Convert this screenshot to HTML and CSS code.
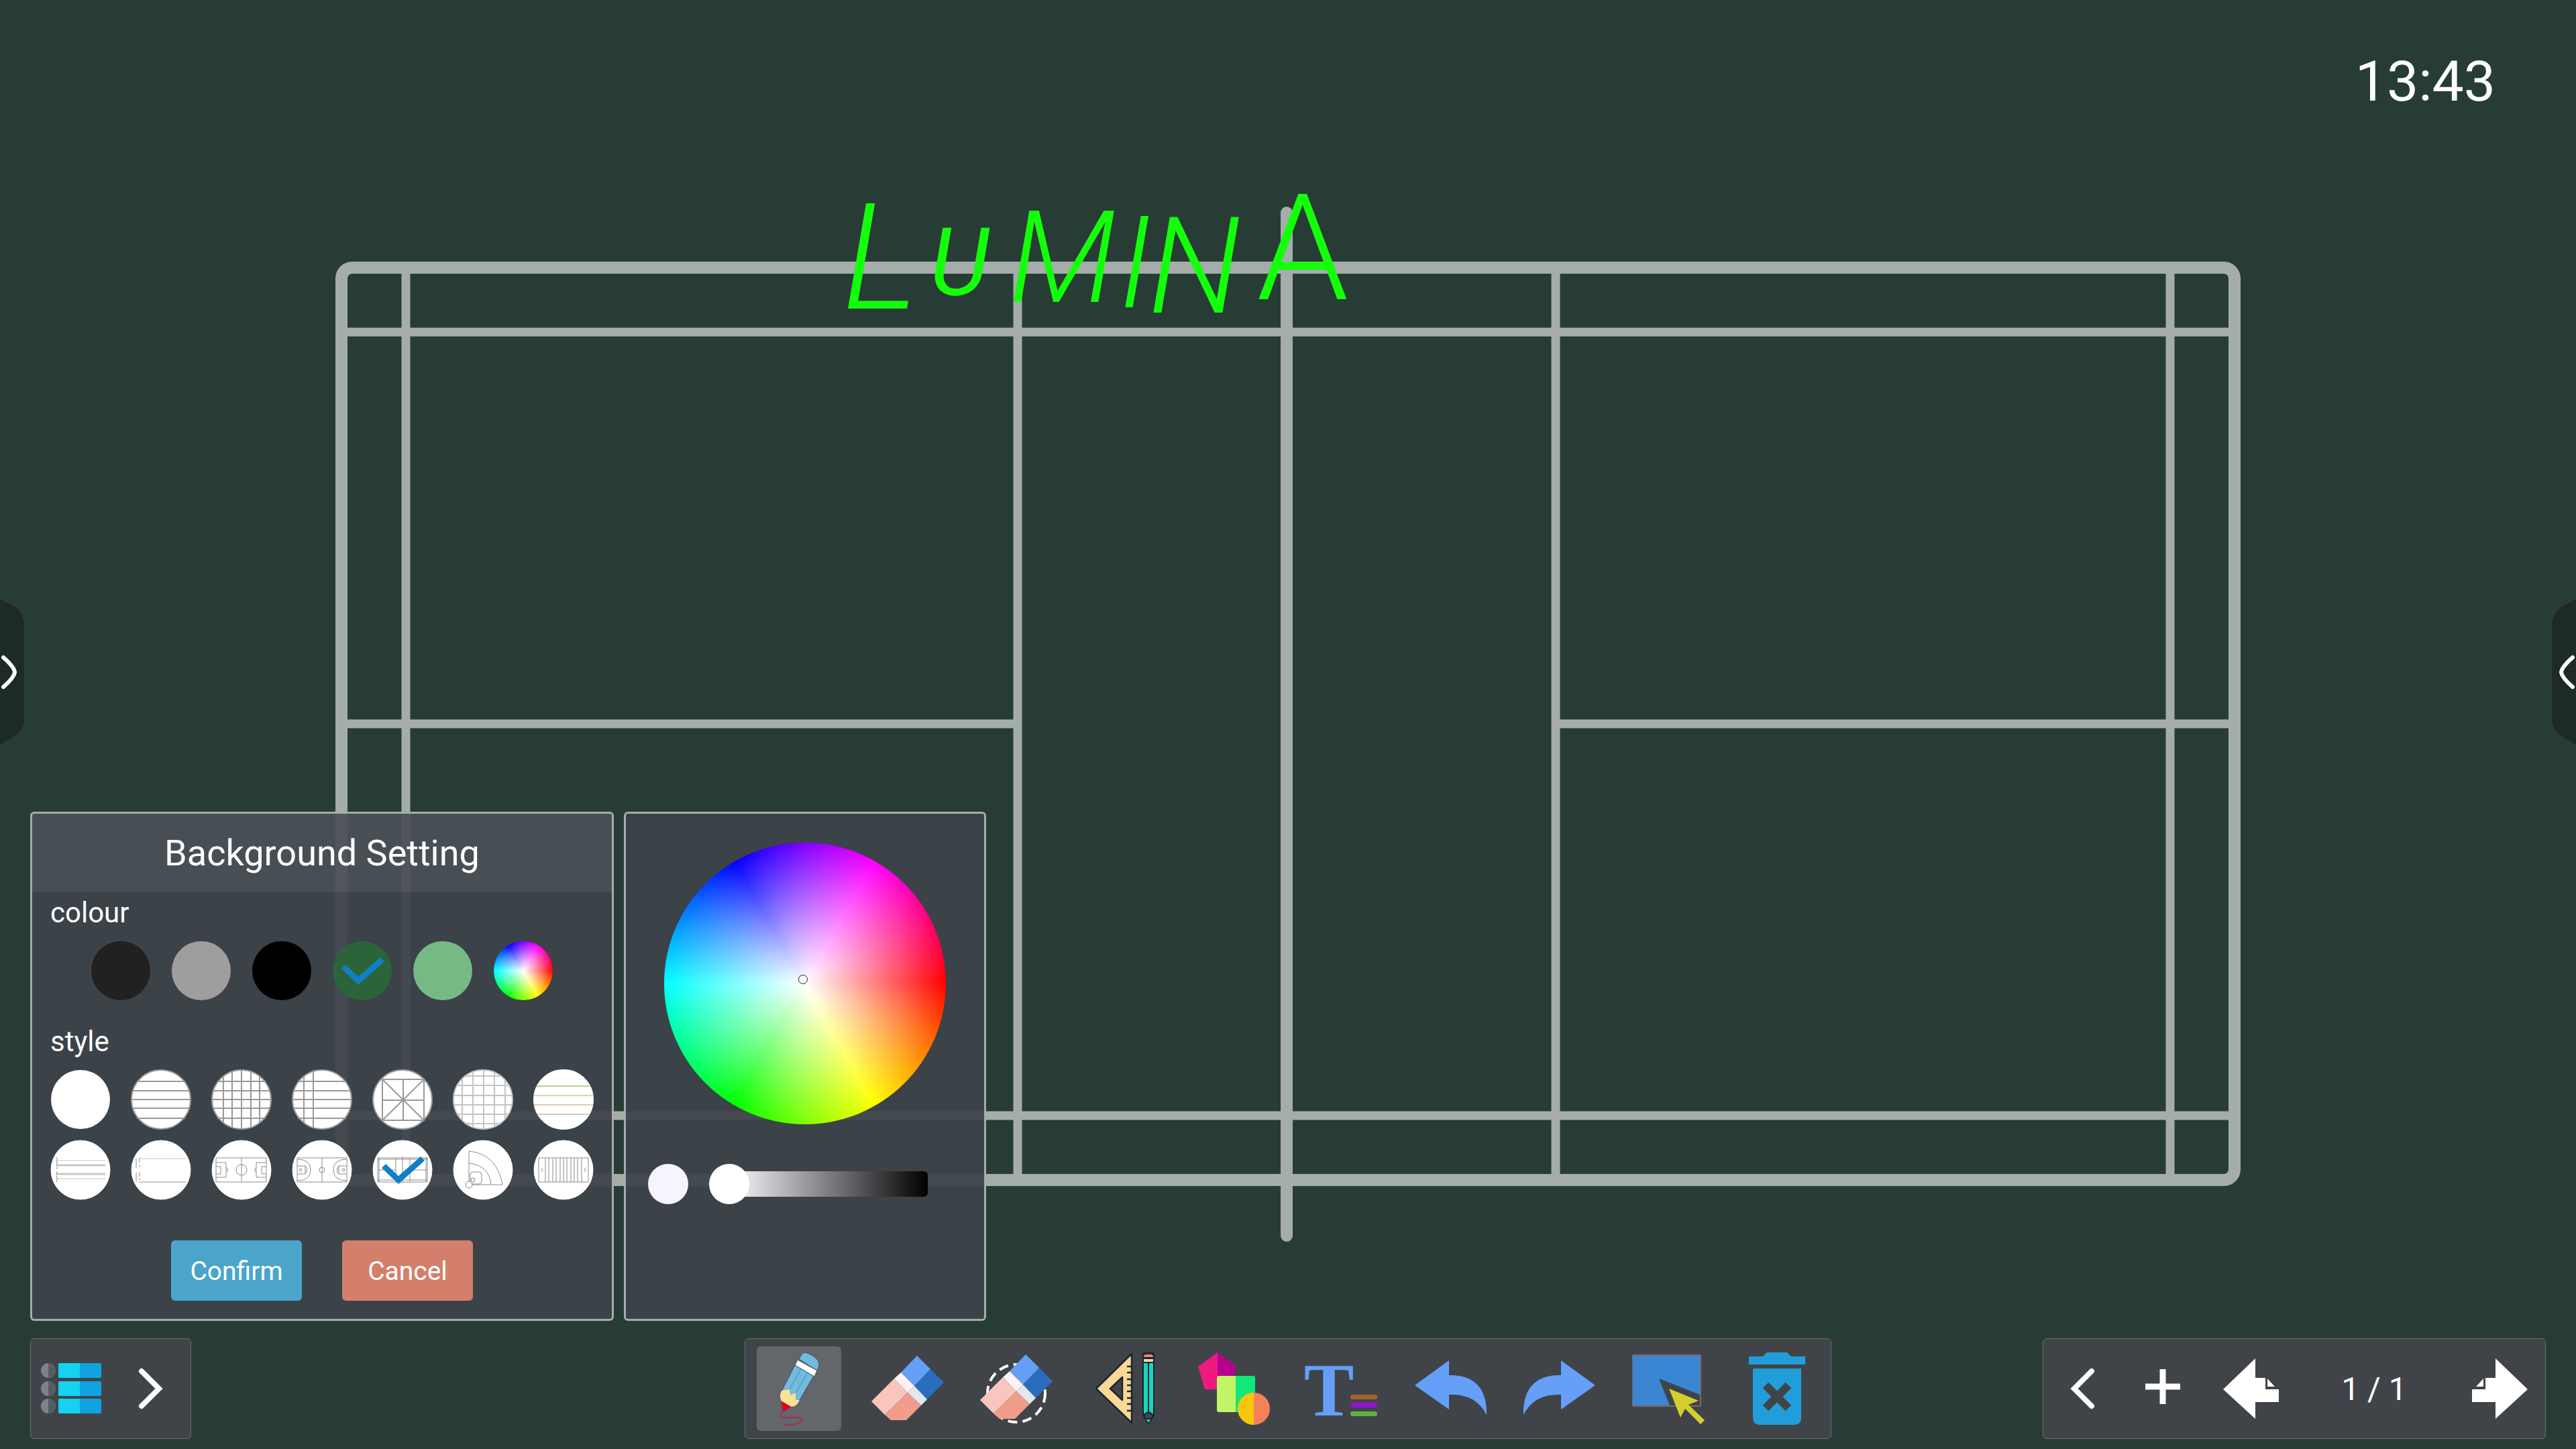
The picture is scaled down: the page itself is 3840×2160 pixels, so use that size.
FILE: index.html
```html
<!DOCTYPE html>
<html lang="en">
<head>
  <meta charset="UTF-8" />
  <meta name="viewport" content="width=device-width, initial-scale=1.0"/>
  <title>Whiteboard</title>
  <link rel="stylesheet" href="styles.css">
</head>
<body>
  <!-- drawing canvas: court background and ink -->
  <svg class="canvas" viewBox="0 0 3840 2160" preserveAspectRatio="xMidYMid slice" aria-label="Canvas">
    <g class="court">
      <rect x="509" y="399" width="2822" height="1360" rx="16" stroke-width="18"/>
      <path stroke-width="13" d="M605 399V1759M1517 399V1759M2319 399V1759M3235 399V1759M509 495H3331M509 1663H3331M509 1079H1517M2319 1079H3331"/>
      <path stroke-width="18" stroke-linecap="round" d="M1918 317V1842"/>
    </g>
    <g class="ink">
      <text x="1256" y="460" font-size="220">L</text>
      <text x="1386" y="440" font-size="140" font-weight="400">U</text>
      <text x="1504" y="450" font-size="190">M</text>
      <text x="1668" y="458" font-size="190">I</text>
      <text x="1712" y="466" font-size="200">N</text>
      <text x="1873" y="446" font-size="220" font-style="normal">A</text>
    </g>
  </svg>

  <button class="handle handle-left" aria-label="Open left drawer">
    <svg viewBox="0 0 36 218"><path class="tab" d="M0 0Q7 5 15 8Q36 17 36 42V178Q36 194 24 202L0 218Z"/><path class="arrow" d="M5 87Q21 101 22 109Q21 117 5 131"/></svg>
  </button>
  <button class="handle handle-right" aria-label="Open right drawer">
    <svg viewBox="0 0 36 218"><path class="tab" d="M0 0Q7 5 15 8Q36 17 36 42V178Q36 194 24 202L0 218Z"/><path class="arrow" d="M5 87Q21 101 22 109Q21 117 5 131"/></svg>
  </button>

  <header>
    <time class="clock">13:43</time>
  </header>

  <main>
    <form class="panel settings">
      <h1>Background Setting</h1>
      <div class="settings-body">
        <h2 id="colour-title">colour</h2>
        <div class="swatches" role="radiogroup" aria-labelledby="colour-title">
          <label class="swatch charcoal"><input type="radio" name="colour" aria-label="Charcoal"></label>
          <label class="swatch grey"><input type="radio" name="colour" aria-label="Grey"></label>
          <label class="swatch black"><input type="radio" name="colour" aria-label="Black"></label>
          <label class="swatch green"><input type="radio" name="colour" aria-label="Green" checked>
            <svg viewBox="0 0 90 90"><path class="tick" d="M14 42L20 36L39 54L72 25L78 31L39 66Z"/></svg>
          </label>
          <label class="swatch mint"><input type="radio" name="colour" aria-label="Mint"></label>
          <label class="swatch wheel"><input type="radio" name="colour" aria-label="Custom"></label>
        </div>
        <h2 id="style-title">style</h2>
        <div class="styles" role="radiogroup" aria-labelledby="style-title">
          <label class="swatch white"><input type="radio" name="style" aria-label="Plain"></label>
          <label class="swatch"><input type="radio" name="style" aria-label="Ruled">
            <svg class="lines" viewBox="0 0 90 90"><circle cx="45" cy="45" r="44"/><path d="M9 18H81M3 32H87M1 45H89M3 58H87M9 73H81"/></svg>
          </label>
          <label class="swatch"><input type="radio" name="style" aria-label="Grid">
            <svg class="lines" viewBox="0 0 90 90"><circle cx="45" cy="45" r="44"/><path d="M9 18H81M3 32H87M1 45H89M3 58H87M9 73H81M18 10V80M31 3V87M45 1V89M59 3V87M72 10V80"/></svg>
          </label>
          <label class="swatch"><input type="radio" name="style" aria-label="Margin">
            <svg class="lines" viewBox="0 0 90 90"><circle cx="45" cy="45" r="44"/><path d="M9 18H81M3 32H87M1 45H89M3 58H87M9 73H81M18 10V80M32 3V87"/></svg>
          </label>
          <label class="swatch"><input type="radio" name="style" aria-label="Character box">
            <svg class="lines" viewBox="0 0 90 90"><circle cx="45" cy="45" r="44"/><path d="M15 15H77V76H15ZM15 15L77 76M77 15L15 76M46 15V76M15 46H77"/></svg>
          </label>
          <label class="swatch"><input type="radio" name="style" aria-label="Squares">
            <svg class="lines light" viewBox="0 0 90 90"><circle cx="45" cy="45" r="44"/><path d="M17 10H73M5 24H85M1 39H89M1 53H89M6 67H84M18 81H72M14 14V76M30 3V87M46 1V89M62 4V86M78 15V75"/></svg>
          </label>
          <label class="swatch"><input type="radio" name="style" aria-label="Copybook">
            <svg class="lines light" viewBox="0 0 90 90"><circle cx="45" cy="45" r="44" stroke="#fff"/><path stroke="#b9cf94" d="M5 25H85"/><path stroke="#d3d8b8" d="M1 39H89"/><path stroke="#e0c8b4" d="M1 53H89"/><path stroke="#cdcfc0" d="M6 67H84"/></svg>
          </label>
          <label class="swatch"><input type="radio" name="style" aria-label="Music score">
            <svg class="lines thin" viewBox="0 0 90 90"><circle cx="45" cy="45" r="44" stroke="#fff"/><path stroke="#c8c8c8" d="M9 31H82M9 58H82"/><path stroke="#c8c8c8" stroke-width="3" d="M9 38H82M9 51H82"/><path d="M9 26Q12 29 9 32Q12 35 9 38M9 39Q12 42 9 44M9 47Q12 50 9 53M9 54Q12 58 9 63"/></svg>
          </label>
          <label class="swatch"><input type="radio" name="style" aria-label="Piano score">
            <svg class="lines thin" viewBox="0 0 90 90"><circle cx="45" cy="45" r="44" stroke="#fff"/><path stroke="#c8c8c8" d="M12 28H82"/><path stroke="#c8c8c8" stroke-width="2" d="M12 63H82"/><path d="M8 28V42M8 49V63M12 27Q15 30 12 34M12 38Q15 39 13 41M12 48Q15 51 12 55M13 57V60"/></svg>
          </label>
          <label class="swatch"><input type="radio" name="style" aria-label="Football">
            <svg class="lines thin" viewBox="0 0 90 90"><circle cx="45" cy="45" r="44" stroke="#fff"/><path d="M7 27H82V63H7ZM45 27V63M7 34H22V56H7M7 40H14V51H7M22 41Q27 45 22 49M82 34H67V56H82M82 40H75V51H82M67 41Q62 45 67 49"/><circle cx="45" cy="45" r="8" fill="none"/></svg>
          </label>
          <label class="swatch"><input type="radio" name="style" aria-label="Basketball">
            <svg class="lines thin" viewBox="0 0 90 90"><circle cx="45" cy="45" r="44" stroke="#fff"/><path d="M8 27H82V63H8ZM45 27V63M8 29Q28 29 28 45Q28 61 8 61M8 39H20V51H8M20 39Q25 45 20 51M82 29Q62 29 62 45Q62 61 82 61M82 39H70V51H82M70 39Q65 45 70 51"/><circle cx="45" cy="45" r="4" fill="none"/><circle cx="13" cy="45" r="2" fill="none"/><circle cx="77" cy="45" r="2" fill="none"/></svg>
          </label>
          <label class="swatch"><input type="radio" name="style" aria-label="Badminton" checked>
            <svg class="lines thin" viewBox="0 0 90 90"><circle cx="45" cy="45" r="44" stroke="#fff"/><path d="M8 27H82V63H8ZM8 29H82M8 60H82M10 27V63M80 27V63M35 27V63M56 27V63M45 25V65M8 45H35M56 45H82"/><path class="tick" d="M14 42L20 36L39 54L72 25L78 31L39 66Z"/></svg>
          </label>
          <label class="swatch"><input type="radio" name="style" aria-label="Baseball">
            <svg class="lines thin" viewBox="0 0 90 90"><circle cx="45" cy="45" r="44" stroke="#fff"/><path d="M24 62V17Q66 21 74 67H29M24 35Q54 38 57 67"/><rect x="26" y="48" width="17" height="18" rx="4" fill="none"/><circle cx="30" cy="60" r="3" fill="none"/><circle cx="24" cy="67" r="5"/></svg>
          </label>
          <label class="swatch"><input type="radio" name="style" aria-label="American football">
            <svg class="lines thin" viewBox="0 0 90 90"><circle cx="45" cy="45" r="44" stroke="#fff"/><path d="M8 27H82V63H8ZM18 27V63M23 27V63M29 27V63M34 27V63M40 27V63M45 27V63M50 27V63M56 27V63M61 27V63M66 27V63M72 27V63M13 42V48M77 42V48"/></svg>
          </label>
        </div>
        <div class="actions">
          <button type="button" class="confirm">Confirm</button>
          <button type="button" class="cancel">Cancel</button>
        </div>
      </div>
    </form>

    <section class="panel picker" aria-label="Colour picker">
      <div class="wheel big-wheel"><span class="marker"></span></div>
      <div class="brightness">
        <span class="preview"></span>
        <input type="range" min="0" max="100" value="0" aria-label="Brightness">
      </div>
    </section>
  </main>

  <footer>
    <nav class="bar bar-menu" aria-label="Menu">
      <button aria-label="Menu">
        <svg width="90" height="76" viewBox="0 0 90 76">
          <g id="menu-row"><circle cx="11" cy="11" r="11" fill="#7c828a"/><path d="M11 0A11 11 0 0 1 11 22Z" fill="#565d61"/><rect x="26" y="0" width="64" height="22" rx="2" fill="#10a3e0"/><path d="M28 0H58V22H28Q26 22 26 20V2Q26 0 28 0Z" fill="#14d2f0"/></g>
          <use href="#menu-row" y="27"/><use href="#menu-row" y="53"/>
        </svg>
      </button>
      <button aria-label="Expand">
        <svg class="chevron" width="36" height="60" viewBox="0 0 36 60"><path d="M4 4L30 30L4 56"/></svg>
      </button>
    </nav>

    <nav class="bar bar-tools" aria-label="Tools">
      <button class="active" aria-label="Pen">
        <svg viewBox="0 0 126 126">
          <path d="M63 19Q68 8 73 9Q92 16 93 26Q93 31 90 36Z" fill="#72bbdd" stroke="#3c4f5c"/>
          <path d="M57 28L85 44L64 80L49 84L37 67Z" fill="#72bbdd" stroke="#3c4f5c"/>
          <path d="M61 20L57 28L86 45L90 36Z" fill="#fff" stroke="#3c4f5c"/>
          <path d="M66 34L49 64M75 40L58 70" fill="none" stroke="#4b8ca8"/>
          <path d="M37 66L49 64L50 73L58 69V80L64 80Q60 90 51 90L37 82Q33 74 37 66Z" fill="#fbe096"/>
          <path d="M37 82L51 90L39 98Z" fill="#e6001b" stroke="#6b2a30" stroke-width=".5"/>
          <path d="M37 99Q34 103 36 105Q38 107 54 106Q69 105 68 109Q67 117 42 117" fill="none" stroke="#bd1a50" stroke-width="1.5"/>
        </svg>
      </button>
      <button aria-label="Eraser">
        <svg viewBox="0 0 126 126">
          <g id="eraser">
            <path d="M77 14L97 34L73 59L53 39Z" fill="#659ff8"/>
            <path d="M97 34L117 54L92 79L73 59Z" fill="#2a6dbe"/>
            <path d="M53 39L73 59L63 69L43 48Z" fill="#fff2f5"/>
            <path d="M73 59L92 79L83 88L63 69Z" fill="#e0e9ee"/>
            <path d="M43 48L63 69L29 102L9 82Z" fill="#f9c6be"/>
            <path d="M63 69L83 88L61 110H38L29 102Z" fill="#f09d8c"/>
          </g>
        </svg>
      </button>
      <button aria-label="Area eraser">
        <svg viewBox="0 0 126 126">
          <circle cx="63" cy="70" r="43" fill="none" stroke="#fff" stroke-width="4" stroke-dasharray="14 8"/>
          <use href="#eraser" y="-2"/>
        </svg>
      </button>
      <button aria-label="Ruler">
        <svg viewBox="0 0 126 126">
          <path fill-rule="evenodd" d="M73 11V114L20 63ZM59 46L41 63L59 80Z" fill="#fbd895" stroke="#192630" stroke-width="2.5" stroke-linejoin="round"/>
          <path d="M66 30H73M66 39H73M66 49H73M66 58H73M66 67H73M66 77H73M66 86H73M66 96H73" stroke="#192630" stroke-width="2.5"/>
          <path d="M89 103V12Q89 9 92 9H104Q107 9 107 12V103L98 117Z" fill="#192630"/>
          <path d="M91 16Q91 12 94 12H102Q105 12 105 16Z" fill="#f27f73"/>
          <path d="M91 19H105V23H91Z" fill="#fbd895"/>
          <path d="M91 25H97V97L91 101ZM99 25H105V101L99 97Z" fill="#17d3c0"/>
          <path d="M92 103L98 99L104 103L102 107H94Z" fill="#42474b"/>
          <path d="M95 109H101L98 114Z" fill="#4fc4b5"/>
        </svg>
      </button>
      <button aria-label="Shapes">
        <svg viewBox="0 0 126 126">
          <path d="M39 9V64H20L10 30Z" fill="#ee1a80"/>
          <path d="M39 9L67 30L57 64H39Z" fill="#b8008f"/>
          <rect x="38" y="44" width="57" height="54" rx="3" fill="#12e877"/>
          <path d="M41 44H66V98H41Q38 98 38 95V47Q38 44 41 44Z" fill="#c2f566"/>
          <circle cx="93" cy="93" r="24" fill="#f58158"/>
          <path d="M93 69A24 24 0 0 0 93 117Z" fill="#f8c60d"/>
        </svg>
      </button>
      <button aria-label="Text">
        <svg viewBox="0 0 126 126">
          <text class="letter" x="43" y="103">T</text>
          <rect x="75" y="72" width="40" height="7" rx="3" fill="#a8622b"/>
          <rect x="75" y="84" width="40" height="7" rx="3" fill="#9610d8"/>
          <rect x="75" y="97" width="40" height="7" rx="3" fill="#5cb341"/>
        </svg>
      </button>
      <button aria-label="Undo">
        <svg viewBox="0 0 126 126"><path id="undo" d="M9 58L60 21V43C100 42 117 65 116 102C105 81 88 71 60 72V94Z" fill="#659ff8"/></svg>
      </button>
      <button aria-label="Redo">
        <svg viewBox="0 0 126 126"><use href="#undo" transform="translate(125 0) scale(-1 1)"/></svg>
      </button>
      <button aria-label="Select">
        <svg viewBox="0 0 126 126">
          <path d="M10 13H111V89H10Z" fill="none" stroke="#b98a92"/>
          <path d="M10 14H110V72L49 48L65 88H10Z" fill="#3a86d3"/>
          <path d="M64 63L108 81L93 87L117 110L111 116L88 93L81 106Z" fill="#d4cf30"/>
        </svg>
      </button>
      <button aria-label="Clear page">
        <svg viewBox="0 0 126 126">
          <path d="M21 15H42L48 9H78L84 15H105V27H21ZM27 33H99V106Q99 117 88 117H38Q27 117 27 106Z" fill="#219ed9"/>
          <path d="M46 58L80 92M80 58L46 92" stroke="#404448" stroke-width="12"/>
        </svg>
      </button>
    </nav>

    <nav class="bar bar-pages" aria-label="Pages">
      <button aria-label="Collapse">
        <svg class="chevron" width="36" height="60" viewBox="0 0 36 60"><path d="M32 4L6 30L32 56"/></svg>
      </button>
      <button aria-label="Add page">
        <svg width="52" height="70" viewBox="0 0 52 70"><path d="M26 6V58M0 32H52" stroke="#fff" stroke-width="9"/></svg>
      </button>
      <button aria-label="Previous page">
        <svg width="84" height="90" viewBox="0 0 84 90"><path id="prev" d="M0 46L48 0V29H63V46H83V65H48V90ZM66 30V42H77Z" fill="#fff"/></svg>
      </button>
      <span class="page">1 / 1</span>
      <button aria-label="Next page">
        <svg width="84" height="90" viewBox="0 0 84 90"><use href="#prev" transform="translate(84 0) scale(-1 1)"/></svg>
      </button>
    </nav>
  </footer>
</body>
</html>
```
FILE: styles.css
```css
* {
  box-sizing: border-box;
}
body {
  margin: 0;
  min-height: 100vh;
  display: flex;
  flex-direction: column;
  position: relative;
  background: #283c36;
  color: #fff;
  font-family: Roboto, sans-serif;
}
button {
  padding: 0;
  border: none;
  background: none;
  color: inherit;
  font-family: inherit;
  cursor: pointer;
}
svg {
  display: block;
  overflow: visible;
}

/* canvas */
.canvas {
  position: absolute;
  inset: 0;
  width: 100%;
  height: 100%;
  overflow: hidden;
}
.court {
  fill: none;
  stroke: #a4adaa;
}
.ink {
  fill: #14ff0a;
  font-family: Roboto, sans-serif;
  font-style: italic;
  font-weight: 300;
}

/* drawer handles on both edges */
.handle {
  position: absolute;
  top: 893px;
  width: 36px;
}
.handle-left {
  left: 0;
}
.handle-right {
  right: 0;
  transform: scaleX(-1);
}
.handle .tab {
  fill: #1d2a26;
}
.handle .arrow {
  fill: none;
  stroke: #fff;
  stroke-width: 6;
  stroke-linecap: round;
}

header {
  position: relative;
  display: flex;
  justify-content: flex-end;
  padding: 72px 120px 0;
}
.clock {
  font-size: 84px;
  line-height: 100px;
}

main {
  position: relative;
  flex: 1;
  display: flex;
  align-items: flex-end;
  gap: 15px;
  padding: 0 45px 26px;
  pointer-events: none;
}
.panel {
  height: 759px;
  border: 3px solid #a4adaa;
  border-radius: 6px;
  background: rgba(61, 67, 73, 0.93);
  pointer-events: auto;
}

/* background settings */
.settings {
  width: 870px;
}
.settings h1 {
  margin: 0;
  background: rgba(255, 255, 255, 0.07);
  font-size: 54px;
  font-weight: 400;
  line-height: 117px;
  text-align: center;
}
.settings-body {
  padding: 7px 27px 0;
}
.settings h2 {
  margin: 0 0 17px;
  font-size: 42px;
  font-weight: 400;
  line-height: 48px;
}
.swatches {
  display: flex;
  justify-content: center;
  gap: 30px;
  margin-bottom: 37px;
}
.styles {
  display: grid;
  grid-template-columns: repeat(7, 90px);
  gap: 15px 30px;
}
.swatch {
  position: relative;
  width: 90px;
  height: 90px;
  border: 1px solid transparent;
  border-radius: 50%;
  background-clip: padding-box;
  cursor: pointer;
}
.swatch input {
  position: absolute;
  inset: 0;
  width: 100%;
  height: 100%;
  margin: 0;
  opacity: 0;
}
.swatch svg {
  width: 90px;
  height: 90px;
  margin: -1px;
}
.charcoal { background-color: #212121; }
.grey { background-color: #a09d9e; }
.black { background-color: #000; }
.green { background-color: #2c6439; }
.mint { background-color: #75b984; }
.white { background-color: #fff; }
.wheel {
  border-radius: 50%;
  background-image:
    radial-gradient(closest-side, #fff, rgba(255, 255, 255, 0)),
    conic-gradient(from 90deg, #f00, #ff0, #0f0, #0ff, #00f, #f0f, #f00);
}
.tick {
  fill: #0e80c8;
  stroke: none;
}
.lines {
  fill: #fff;
  stroke: #999;
  stroke-width: 2;
}
.lines path:not(.tick) {
  fill: none;
}
.lines.light {
  stroke: #c4c4c4;
}
.lines.thin {
  stroke: #8c8c8c;
  stroke-width: 1;
}
.actions {
  display: flex;
  justify-content: center;
  gap: 60px;
  margin-top: 60px;
}
.actions button {
  width: 195px;
  height: 90px;
  padding-top: 2px;
  border-radius: 6px;
  font-size: 39px;
}
.confirm { background: #4ba5cb; }
.cancel { background: #d37f6b; }

/* colour picker */
.picker {
  width: 540px;
  padding: 43px 33px;
}
.big-wheel {
  position: relative;
  width: 420px;
  height: 420px;
  margin: 0 auto;
}
.marker {
  position: absolute;
  left: 200px;
  top: 197px;
  width: 14px;
  height: 14px;
  border: 1px solid #222;
  border-radius: 50%;
}
.brightness {
  display: flex;
  align-items: center;
  gap: 31px;
  margin-top: 59px;
}
.preview {
  width: 60px;
  height: 60px;
  border-radius: 50%;
  background: #f6f5ff;
}
.brightness input {
  appearance: none;
  width: 326px;
  height: 60px;
  margin: 0;
  background: none;
}
.brightness input::-webkit-slider-runnable-track {
  height: 38px;
  border-radius: 6px;
  background: linear-gradient(to right, transparent 30px, #fbfaff 30px, #000);
}
.brightness input::-webkit-slider-thumb {
  appearance: none;
  width: 60px;
  height: 60px;
  margin-top: -11px;
  border-radius: 50%;
  background: #fff;
}

/* bottom bars */
footer {
  position: relative;
  display: grid;
  grid-template-columns: 1fr auto 1fr;
  padding: 0 45px 15px;
}
.bar {
  display: flex;
  align-items: center;
  height: 150px;
  border: 1px solid #66706f;
  border-radius: 6px;
  background: #404448;
}
.bar button {
  display: flex;
  align-items: center;
  justify-content: center;
}
.chevron path {
  fill: none;
  stroke: #fff;
  stroke-width: 8;
  stroke-linecap: round;
}
.bar-menu {
  width: 240px;
}
.bar-menu button {
  flex: 1;
  height: 126px;
}
.bar-tools {
  gap: 36px;
  padding: 0 17px;
}
.bar-tools button {
  width: 126px;
  height: 126px;
  border-radius: 6px;
}
.bar-tools svg {
  width: 126px;
  height: 126px;
}
.bar-tools .active {
  background: #63666b;
}
.letter {
  fill: #659ff8;
  font-family: "Liberation Serif", serif;
  font-size: 112px;
  font-weight: 700;
  text-anchor: middle;
}
.bar-pages {
  display: grid;
  grid-template-columns: 116px 124px 140px 1fr 136px;
  justify-self: end;
  width: 750px;
}
.page {
  padding-right: 6px;
  font-size: 48px;
  text-align: center;
}
```
